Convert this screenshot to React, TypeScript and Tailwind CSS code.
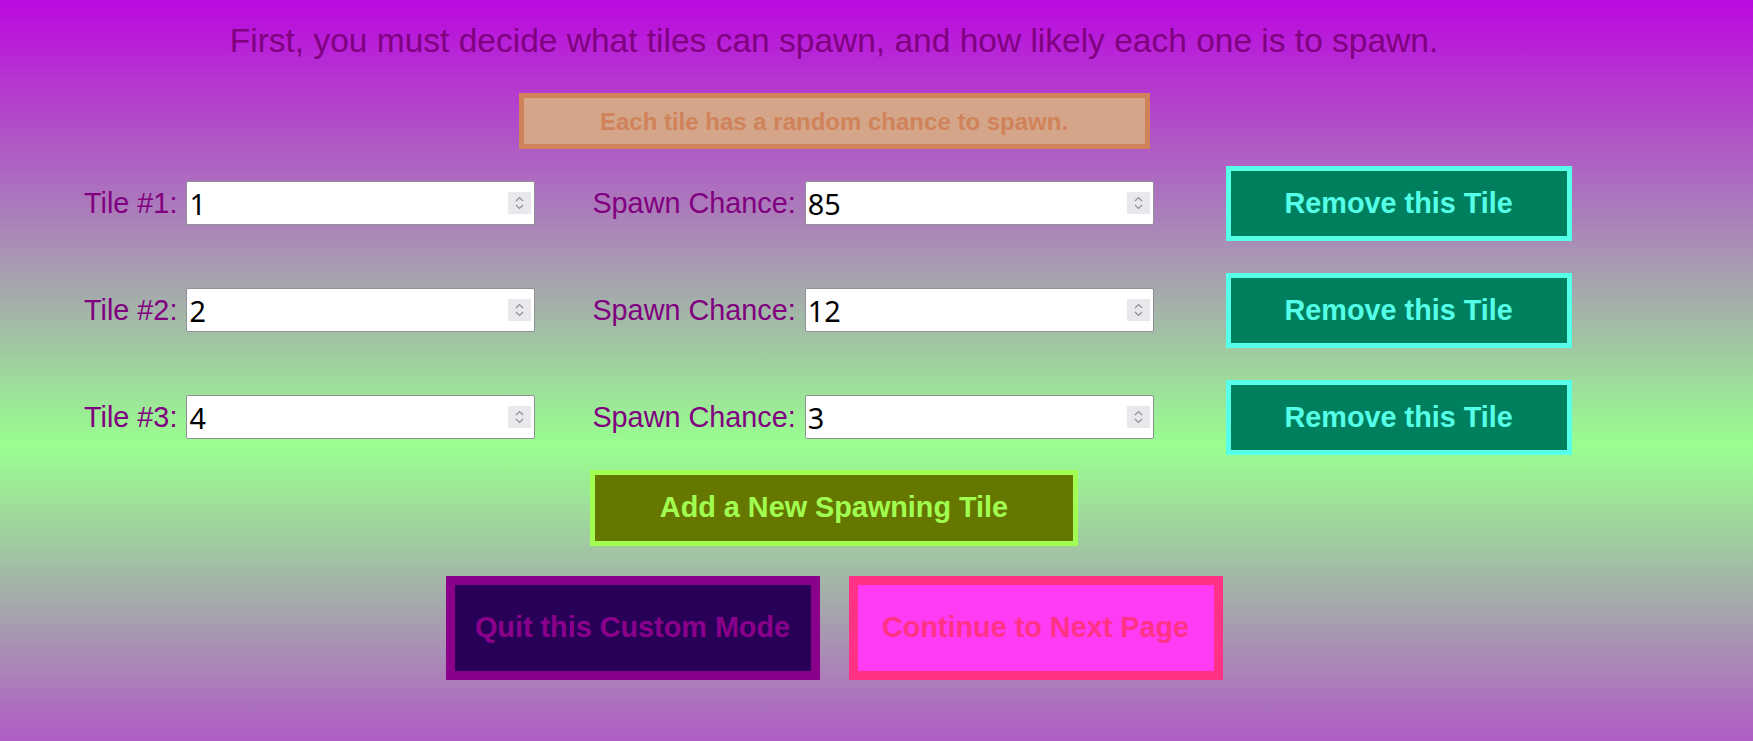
import React from "react";

const rows = [
  { tile: "1", chance: "85" },
  { tile: "2", chance: "12" },
  { tile: "4", chance: "3" },
];

function NumberBox({ value, className = "" }: { value: string; className?: string }) {
  return (
    <div
      className={
        "flex items-center w-[349px] h-[44px] bg-white border border-[#8f8f96] rounded-[2px] " +
        className
      }
    >
      <input
        type="text"
        defaultValue={value}
        className="flex-1 min-w-0 h-full pl-[2px] bg-transparent outline-none text-black text-[28.8px] leading-[39px] font-['Noto_Sans',sans-serif]"
      />
      <div className="w-[23px] h-[22px] mr-[3px] bg-[#e9e9ed] flex items-center justify-center shrink-0">
        <svg width="23" height="22" viewBox="0 0 23 22" fill="none">
          <path d="M8 9 L11.5 5.5 L15 9" stroke="#8e8e96" strokeWidth="1.2" />
          <path d="M8 13 L11.5 16.5 L15 13" stroke="#8e8e96" strokeWidth="1.2" />
        </svg>
      </div>
    </div>
  );
}

export default function App() {
  return (
    <div className="min-h-[741px] w-full bg-[linear-gradient(to_bottom,#bb08e0_0px,#99ff90_447px,#bb08e0_894px)] font-['Liberation_Sans',Arial,sans-serif] overflow-hidden">
      <div className="w-[1668px] pt-[22px] flex flex-col">
        <h1 className="text-center text-[33.5px] leading-[38.5px] text-[#800080] font-normal">
          First, you must decide what tiles can spawn, and how likely each one is to spawn.
        </h1>

        <div className="self-center mt-[32px] w-[631px] h-[56px] border-[5px] border-[#d0835a] bg-[#d4a588] flex items-center justify-center">
          <span className="text-[24px] leading-[28px] font-bold text-[#d0835a] pt-[2px]">
            Each tile has a random chance to spawn.
          </span>
        </div>

        <div className="mt-[17px] flex flex-col gap-[32px]">
          {rows.map((r, i) => (
            <div key={i} className="flex items-center h-[75px] pl-[84px]">
              <span className="text-[28.8px] leading-[33px] text-[#800080]">Tile #{i + 1}:</span>
              <NumberBox value={r.tile} className="ml-[9px]" />
              <span className="ml-[57px] text-[28.8px] leading-[33px] text-[#800080]">Spawn Chance:</span>
              <NumberBox value={r.chance} className="ml-[9px]" />
              <button className="ml-[72px] w-[346px] h-[75px] border-[5px] border-[#55ffe8] bg-[#007f5f] text-[#55ffe8] text-[28.8px] leading-[33px] font-bold">
                Remove this Tile
              </button>
            </div>
          ))}
        </div>

        <button className="self-center mt-[15px] w-[488px] h-[76px] border-[5px] border-[#a0ff50] bg-[#667700] text-[#a0ff50] text-[28.8px] leading-[33px] font-bold">
          Add a New Spawning Tile
        </button>

        <div className="mt-[30px] flex justify-center gap-[29px]">
          <button className="w-[374px] h-[104px] border-[9px] border-[#8b008b] bg-[#280058] text-[#8b008b] text-[28.8px] leading-[33px] font-bold">
            Quit this Custom Mode
          </button>
          <button className="w-[374px] h-[104px] border-[9px] border-[#ff3385] bg-[#ff3bf3] text-[#ff3385] text-[28.8px] leading-[33px] font-bold">
            Continue to Next Page
          </button>
        </div>
      </div>
    </div>
  );
}
